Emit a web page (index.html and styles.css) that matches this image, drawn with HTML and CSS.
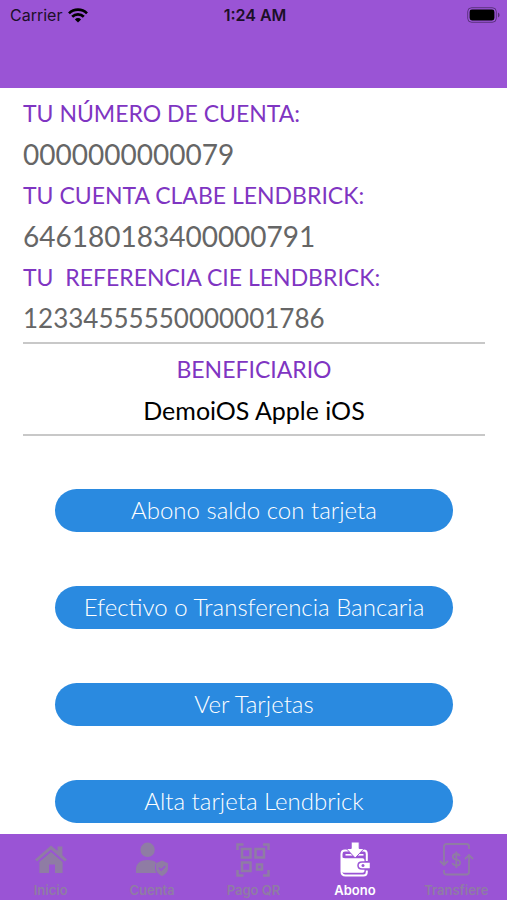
FILE: index.html
```html
<!DOCTYPE html>
<html lang="es">
<head>
    <meta charset="UTF-8">
    <meta name="viewport" content="width=device-width, initial-scale=1.0">
    <title>Abono</title>
    <link rel="stylesheet" href="styles.css">
</head>
<body>
    <header class="header">
        <div class="status-bar">
            <div class="carrier">
                <span>Carrier</span>
                <svg width="20" height="15" viewBox="0 0 20 15" fill="none" stroke="#000" stroke-width="2.7">
                    <path d="M1 5.4a12.8 12.8 0 0 1 18 0"/>
                    <path d="M4.2 8.8a8.2 8.2 0 0 1 11.6 0"/>
                    <path d="M10 14.6l-3.1-3.2a4.4 4.4 0 0 1 6.2 0z" fill="#000" stroke="none"/>
                </svg>
            </div>
            <span class="clock">1:24 AM</span>
            <div class="battery">
                <svg width="33" height="16" viewBox="0 0 33 16">
                    <rect x="0.7" y="0.7" width="28.6" height="14.6" rx="4" fill="none" stroke="#000" stroke-opacity="0.4"/>
                    <rect x="2.6" y="2.6" width="24.8" height="10.8" rx="2.4"/>
                    <path d="M31 5.6q1.6 0.8 1.6 2.4t-1.6 2.4z" fill-opacity="0.45"/>
                </svg>
            </div>
        </div>
    </header>

    <main class="content">
        <dl class="account">
            <dt>TU NÚMERO DE CUENTA:</dt>
            <dd>0000000000079</dd>
            <dt>TU CUENTA CLABE LENDBRICK:</dt>
            <dd>646180183400000791</dd>
            <dt>TU&nbsp; REFERENCIA CIE LENDBRICK:</dt>
            <dd class="reference">12334555550000001786</dd>
        </dl>

        <section class="beneficiary">
            <h2>BENEFICIARIO</h2>
            <p>DemoiOS Apple iOS</p>
        </section>

        <div class="actions">
            <button type="button">Abono saldo con tarjeta</button>
            <button type="button">Efectivo o Transferencia Bancaria</button>
            <button type="button">Ver Tarjetas</button>
            <button type="button">Alta tarjeta Lendbrick</button>
        </div>
    </main>

    <nav class="tab-bar">
        <a href="#inicio">
            <svg width="36" height="36" viewBox="0 0 36 36" fill="currentColor">
                <path d="M18 3.4L24.6 9V4.4H29.4V13.2L34 17.4 32 19.6 18 7.6 4 19.6 2 17.4z"/>
                <path d="M18 10L29.6 20V31H22V22.4H16V31H6.4V20z"/>
            </svg>
            <span>Inicio</span>
        </a>
        <a href="#cuenta">
            <svg width="36" height="36" viewBox="0 0 36 36" fill="currentColor">
                <circle cx="13.6" cy="7.8" r="7.2"/>
                <path d="M2 31v-3.5C2 21 7 18 13.6 18 17 18 20 18.8 22 20.4 20.5 24 20.6 28 22.4 31z"/>
                <path d="M28 18.6l6 2.7v5.2c0 3.4-2.8 6-6 7.5-3.2-1.500-6-4.100-6-7.5v-5.2z"/>
                <path d="M25 25.800l2.2 2.3 4-4.2" fill="none" stroke="#9a54d5" stroke-width="1.5"/>
            </svg>
            <span>Cuenta</span>
        </a>
        <a href="#pago-qr">
            <svg width="36" height="36" viewBox="0 0 36 36" fill="none" stroke="currentColor" stroke-width="2.5">
                <path d="M2.500 8V2.500H8.500M28 2.500h5.500V8M33.500 28v5.500H28M8.500 33.500H2.500V28"/>
                <rect x="7" y="7" width="8.5" height="8.5"/>
                <rect x="20.500" y="7" width="8.5" height="8.5"/>
                <rect x="7" y="20.500" width="8.5" height="8.5"/>
                <rect x="22" y="22.500" width="5" height="5"/>
            </svg>
            <span>Pago QR</span>
        </a>
        <a href="#abono" class="active" aria-current="page">
            <svg width="36" height="36" viewBox="0 0 36 36" fill="none">
                <path d="M12 8.600H8Q4.500 8.600 4.500 12V29.500Q4.500 33.500 8.500 33.500H26.500Q29.800 33.500 29.800 30V28.500" stroke="currentColor" stroke-width="2"/>
                <path d="M23 8.600h3.800Q29.800 8.600 29.800 12V19" stroke="currentColor" stroke-width="2"/>
                <path d="M4 14.500Q5.500 16.200 8 16.200H25.500Q27.500 16.200 27.500 18.200V29Q27.500 30.800 25.500 30.800H6.500L4 29z" fill="currentColor"/>
                <path d="M8.500 12.800H26.500" stroke="currentColor" stroke-width="1.600"/>
                <path d="M14.200 0h8v6.500h5l-9 9.500-9-9.500h5z" fill="currentColor" stroke="#9a54d5"/>
                <path d="M33.500 20H25q-4 0-4 3.500t4 3.500h8.500z" fill="currentColor" stroke="#9a54d5" stroke-width="1.500"/>
                <circle cx="26" cy="23.500" r="1.500" fill="#9a54d5"/>
            </svg>
            <span>Abono</span>
        </a>
        <a href="#transfiere">
            <svg width="36" height="36" viewBox="0 0 36 36" fill="none" stroke="currentColor" stroke-width="1.800">
                <path d="M6 23V4.500q0-2.500 2.500-2.500h20q2.500 0 2.500 2.500V7M2 19l4 4 4-4"/>
                <path d="M31 13v17q0 2.500-2.500 2.500h-20Q6 32.500 6 30v-2M27 17l4-4 4 4"/>
                <path d="M22 14q-1-2-3.700-2-3.500 0-3.500 2.700 0 2.300 3.500 2.900 3.900.7 3.900 3.200 0 2.700-3.900 2.700-3 0-4-2.500M18.300 9.500v16.500"/>
            </svg>
            <span>Transfiere</span>
        </a>
    </nav>
</body>
</html>
```

FILE: styles.css
```css
* {
    box-sizing: border-box;
}

body {
    display: flex;
    flex-direction: column;
    min-height: 100vh;
    margin: 0;
    font-family: Lato, "Liberation Sans", sans-serif;
    background-color: #fff;
}

.header {
    height: 88px;
    background-color: #9a54d5;
}

.status-bar {
    display: grid;
    grid-template-columns: 1fr auto 1fr;
    align-items: center;
    height: 30px;
    padding: 0 7px 0 10px;
    font-family: Inter, sans-serif;
    font-size: 16px;
    color: #1c0f28;
}

.carrier {
    display: flex;
    align-items: center;
    gap: 6px;
}

.clock {
    font-weight: 600;
}

.battery {
    display: flex;
    justify-content: flex-end;
}

.content {
    flex: 1;
    padding: 5px 22px 10px 23px;
}

.account {
    margin: 0;
    padding-bottom: 3px;
    border-bottom: 2px solid #c8c8c8;
}

.account dt,
.account dd {
    margin: 0;
    line-height: 41px;
    white-space: nowrap;
}

.account dt,
.beneficiary h2 {
    font-size: 23px;
    font-weight: 400;
    color: #7f35c2;
}

.account dd {
    font-size: 28px;
    color: #666;
}

.account .reference {
    font-size: 26px;
}

.beneficiary {
    padding: 5px 0 3px;
    text-align: center;
    border-bottom: 2px solid #c8c8c8;
}

.beneficiary h2,
.beneficiary p {
    margin: 0;
    line-height: 41px;
}

.beneficiary p {
    font-size: 25px;
    color: #000;
}

.actions {
    display: flex;
    flex-direction: column;
    gap: 54px;
    padding: 53px 32px 0;
}

.actions button {
    height: 43px;
    padding: 0 0 2px;
    border: none;
    border-radius: 22px;
    font-family: inherit;
    font-size: 24px;
    font-weight: 300;
    color: #fff;
    background-color: #2a8ae0;
    cursor: pointer;
}

.tab-bar {
    display: grid;
    grid-template-columns: repeat(5, 1fr);
    height: 66px;
    padding-top: 8px;
    background-color: #9a54d5;
}

.tab-bar a {
    display: flex;
    flex-direction: column;
    align-items: center;
    gap: 4px;
    font-family: Inter, sans-serif;
    font-size: 13px;
    font-weight: 600;
    line-height: 16px;
    color: #8f7ca4;
    text-decoration: none;
}

.tab-bar .active {
    color: #fff;
}
```
